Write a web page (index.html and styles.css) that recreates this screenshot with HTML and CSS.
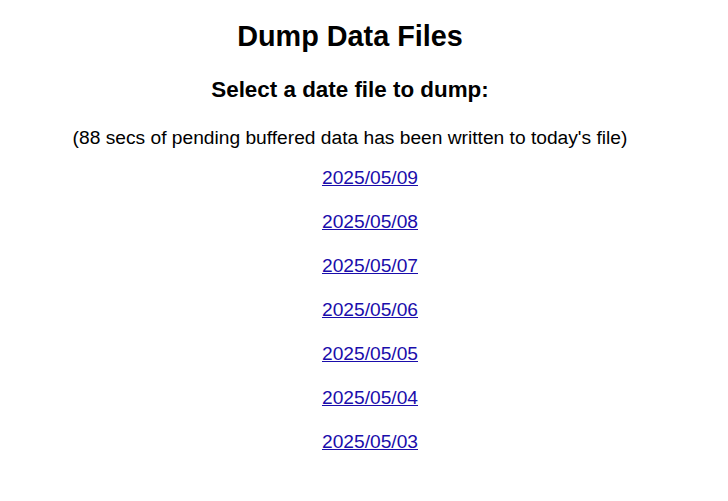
FILE: index.html
```html
<!DOCTYPE html>
<html lang="en">
<head>
  <meta charset="UTF-8">
  <title>Dump Data Files</title>
  <link rel="stylesheet" href="styles.css">
</head>
<body>
  <h1>Dump Data Files</h1>
  <h3>Select a date file to dump:</h3>
  <p class="note">(88 secs of pending buffered data has been written to today's file)</p>
  <ul class="files">
    <li><a href="#">2025/05/09</a></li>
    <li><a href="#">2025/05/08</a></li>
    <li><a href="#">2025/05/07</a></li>
    <li><a href="#">2025/05/06</a></li>
    <li><a href="#">2025/05/05</a></li>
    <li><a href="#">2025/05/04</a></li>
    <li><a href="#">2025/05/03</a></li>
  </ul>
</body>
</html>
```

FILE: styles.css
```css
body {
  margin: 8px 36px 8px 8px;
  font-family: "Liberation Sans", Arial, sans-serif;
  font-size: 19.2px;
  text-align: center;
  color: #000;
  background: #fff;
}
h1 {
  font-size: 28.8px;
  margin: 12px 0 24px;
}
h3 {
  font-size: 22.4px;
  margin: 24px 0 24px;
}
.note {
  margin: 24px 0 6px;
}
.files {
  list-style: none;
  margin: 0;
  padding-left: 40px;
}
.files li {
  padding: 9.5px 0;
  line-height: 25px;
}
a {
  color: #1a0dab;
}
```
